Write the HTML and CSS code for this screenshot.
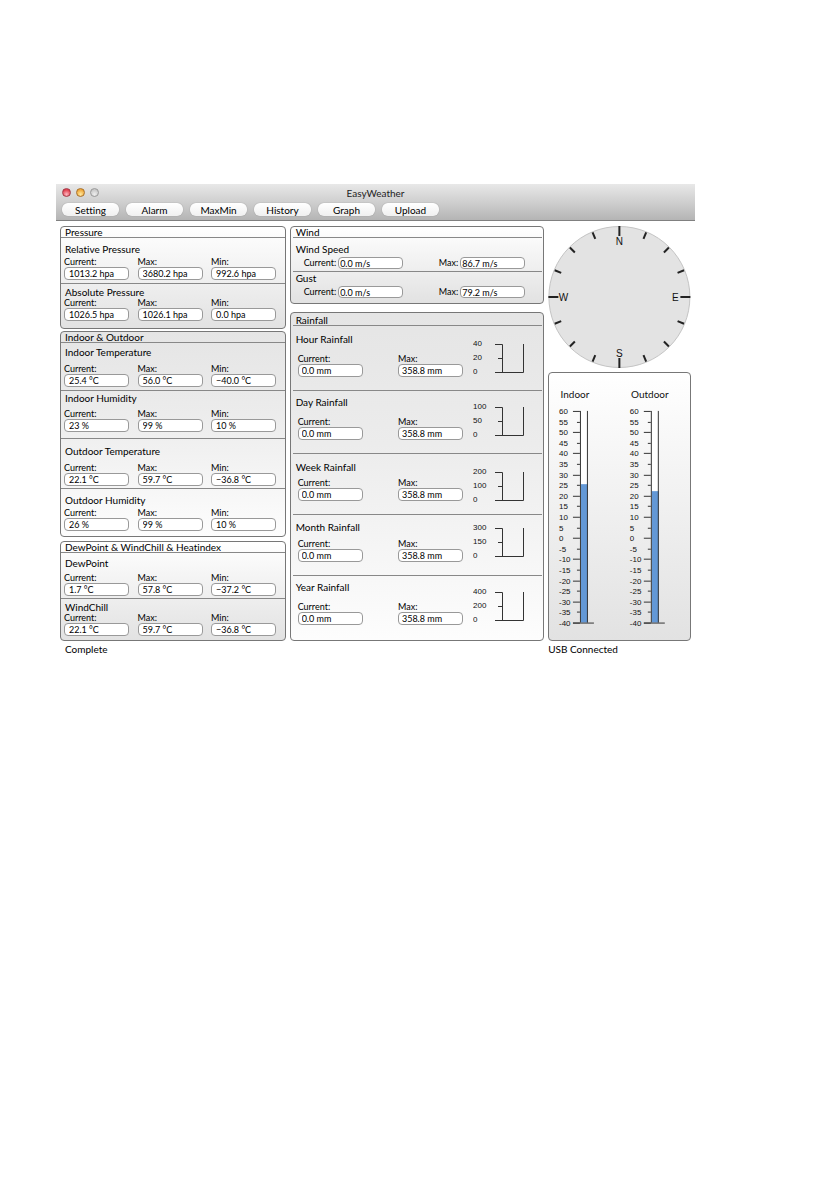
FILE: index.html
```html
<!DOCTYPE html>
<html lang="en">
<head>
<meta charset="utf-8">
<title>EasyWeather</title>
<link rel="stylesheet" href="styles.css">
</head>
<body>
<div class="window">
  <header class="toolbar">
    <div class="titlebar">
      <div class="lights"><span class="light close"></span><span class="light minimize"></span><span class="light zoom"></span></div>
      <h1>EasyWeather</h1>
    </div>
    <nav class="actions">
      <button type="button">Setting</button>
      <button type="button">Alarm</button>
      <button type="button">MaxMin</button>
      <button type="button">History</button>
      <button type="button">Graph</button>
      <button type="button">Upload</button>
    </nav>
  </header>

  <main class="columns">
    <div class="column readings">
      <section class="panel fade-down pressure">
        <h2>Pressure</h2>
        <div class="reading relative-pressure">
          <h3>Relative Pressure</h3>
          <div class="fields">
            <label>Current:<input value="1013.2 hpa"></label>
            <label>Max:<input value="3680.2 hpa"></label>
            <label>Min:<input value="992.6 hpa"></label>
          </div>
        </div>
        <div class="reading absolute-pressure">
          <h3>Absolute Pressure</h3>
          <div class="fields">
            <label>Current:<input value="1026.5 hpa"></label>
            <label>Max:<input value="1026.1 hpa"></label>
            <label>Min:<input value="0.0 hpa"></label>
          </div>
        </div>
      </section>

      <section class="panel fade-up climate">
        <h2>Indoor &amp; Outdoor</h2>
        <div class="reading indoor-temperature">
          <h3>Indoor Temperature</h3>
          <div class="fields">
            <label>Current:<input value="25.4 °C"></label>
            <label>Max:<input value="56.0 °C"></label>
            <label>Min:<input value="−40.0 °C"></label>
          </div>
        </div>
        <div class="reading indoor-humidity">
          <h3>Indoor Humidity</h3>
          <div class="fields">
            <label>Current:<input value="23 %"></label>
            <label>Max:<input value="99 %"></label>
            <label>Min:<input value="10 %"></label>
          </div>
        </div>
        <div class="reading outdoor-temperature">
          <h3>Outdoor Temperature</h3>
          <div class="fields">
            <label>Current:<input value="22.1 °C"></label>
            <label>Max:<input value="59.7 °C"></label>
            <label>Min:<input value="−36.8 °C"></label>
          </div>
        </div>
        <div class="reading outdoor-humidity">
          <h3>Outdoor Humidity</h3>
          <div class="fields">
            <label>Current:<input value="26 %"></label>
            <label>Max:<input value="99 %"></label>
            <label>Min:<input value="10 %"></label>
          </div>
        </div>
      </section>

      <section class="panel fade-down dew">
        <h2>DewPoint &amp; WindChill &amp; Heatindex</h2>
        <div class="reading dewpoint">
          <h3>DewPoint</h3>
          <div class="fields">
            <label>Current:<input value="1.7 °C"></label>
            <label>Max:<input value="57.8 °C"></label>
            <label>Min:<input value="−37.2 °C"></label>
          </div>
        </div>
        <div class="reading windchill">
          <h3>WindChill</h3>
          <div class="fields">
            <label>Current:<input value="22.1 °C"></label>
            <label>Max:<input value="59.7 °C"></label>
            <label>Min:<input value="−36.8 °C"></label>
          </div>
        </div>
      </section>
    </div>

    <div class="column middle">
      <section class="panel fade-down wind">
        <h2>Wind</h2>
        <div class="reading wind-speed">
          <h3>Wind Speed</h3>
          <div class="inline-fields">
            <label>Current:<input value="0.0 m/s"></label>
            <label>Max:<input value="86.7 m/s"></label>
          </div>
        </div>
        <div class="reading gust">
          <h3>Gust</h3>
          <div class="inline-fields">
            <label>Current:<input value="0.0 m/s"></label>
            <label>Max:<input value="79.2 m/s"></label>
          </div>
        </div>
      </section>

      <section class="panel fade-up rainfall">
        <h2>Rainfall</h2>
        <div class="reading hour">
          <h3>Hour Rainfall</h3>
          <div class="rain-fields">
            <label>Current:<input value="0.0 mm"></label>
            <label>Max:<input value="358.8 mm"></label>
          </div>
          <svg class="gauge" viewBox="0 0 54 40"><text x="0" y="9">40</text><text x="0" y="23">20</text><text x="0" y="37">0</text><path d="M22 7.500h7.500v28M25 21.500h4M50.500 7v28.500H22"/></svg>
        </div>
        <div class="reading day">
          <h3>Day Rainfall</h3>
          <div class="rain-fields">
            <label>Current:<input value="0.0 mm"></label>
            <label>Max:<input value="358.8 mm"></label>
          </div>
          <svg class="gauge" viewBox="0 0 54 40"><text x="0" y="9">100</text><text x="0" y="23">50</text><text x="0" y="37">0</text><path d="M22 7.500h7.500v28M25 21.500h4M50.500 7v28.500H22"/></svg>
        </div>
        <div class="reading week">
          <h3>Week Rainfall</h3>
          <div class="rain-fields">
            <label>Current:<input value="0.0 mm"></label>
            <label>Max:<input value="358.8 mm"></label>
          </div>
          <svg class="gauge" viewBox="0 0 54 40"><text x="0" y="9">200</text><text x="0" y="23">100</text><text x="0" y="37">0</text><path d="M22 7.500h7.500v28M25 21.500h4M50.500 7v28.500H22"/></svg>
        </div>
        <div class="reading month">
          <h3>Month Rainfall</h3>
          <div class="rain-fields">
            <label>Current:<input value="0.0 mm"></label>
            <label>Max:<input value="358.8 mm"></label>
          </div>
          <svg class="gauge" viewBox="0 0 54 40"><text x="0" y="9">300</text><text x="0" y="23">150</text><text x="0" y="37">0</text><path d="M22 7.500h7.500v28M25 21.500h4M50.500 7v28.500H22"/></svg>
        </div>
        <div class="reading year">
          <h3>Year Rainfall</h3>
          <div class="rain-fields">
            <label>Current:<input value="0.0 mm"></label>
            <label>Max:<input value="358.8 mm"></label>
          </div>
          <svg class="gauge" viewBox="0 0 54 40"><text x="0" y="9">400</text><text x="0" y="23">200</text><text x="0" y="37">0</text><path d="M22 7.500h7.500v28M25 21.500h4M50.500 7v28.500H22"/></svg>
        </div>
      </section>
    </div>

    <aside class="column dials">
      <svg class="compass" viewBox="0 0 142 142">
        <circle cx="71" cy="71" r="70.500"/>
        <g id="compass-ticks"></g>
        <text x="71" y="19">N</text>
        <text x="71" y="131">S</text>
        <text x="15" y="75">W</text>
        <text x="127" y="75">E</text>
      </svg>
      <section class="panel fade-down thermometers">
        <svg class="scales" viewBox="0 0 141 267">
          <text class="scale-title" x="26" y="25">Indoor</text>
          <text class="scale-title" x="101" y="25">Outdoor</text>
          <g id="indoor" data-value="25.4" transform="translate(10 0)"></g>
          <g id="outdoor" data-value="22.1" transform="translate(81 0)"></g>
        </svg>
      </section>
    </aside>
  </main>

  <footer class="status">
    <span class="progress">Complete</span>
    <span class="connection">USB Connected</span>
  </footer>
</div>
<script src="script.js"></script>
</body>
</html>
```

FILE: styles.css
```css
* {
  box-sizing: border-box;
}

body {
  margin: 0;
  padding: 184px 127px 40px 56px;
  background: #fff;
  color: #000;
  font-family: Lato, "Open Sans", sans-serif;
  font-size: 10px;
  font-weight: 400;
  font-variant-ligatures: none;
  line-height: 12px;
}

h1, h2, h3 {
  margin: 0;
  font-size: 10px;
  font-weight: 400;
}

.toolbar {
  height: 37px;
  border-bottom: 1px solid #808080;
  background: linear-gradient(#e8e8e8, #cfcfcf 50%, #b4b4b4);
}

.titlebar {
  display: grid;
  grid-template-columns: 1fr auto 1fr;
  align-items: center;
  height: 17px;
  padding: 0 6px;
}

.titlebar h1 {
  color: #222;
}

.lights {
  display: flex;
  gap: 5px;
}

.light {
  width: 9px;
  height: 9px;
  border: 1px solid #888;
  border-radius: 50%;
}

.close {
  border-color: #a33a48;
  background: radial-gradient(circle at 50% 75%, #ffb8c0, #e0404f 70%);
}

.minimize {
  border-color: #a8702a;
  background: radial-gradient(circle at 50% 75%, #ffe9a0, #efa83a 70%);
}

.zoom {
  border-color: #999;
  background: radial-gradient(circle at 50% 75%, #eee, #c4c4c4 80%);
}

.actions {
  display: flex;
  gap: 7px;
  padding: 2px 6px 0;
}

.actions button {
  width: 57px;
  height: 13px;
  padding: 0;
  border: 0;
  border-radius: 6px;
  background: linear-gradient(#fff, #f0f0f0);
  box-shadow: 0 0 1px #777;
  color: #000;
  font: inherit;
}

.columns {
  display: grid;
  grid-template-columns: 226fr 255fr 143fr;
  column-gap: 4px;
  padding: 5px 4px 0;
}

.column {
  display: flex;
  flex-direction: column;
  min-width: 0;
}

.readings {
  gap: 2px;
}

.middle {
  gap: 8px;
}

.dials {
  gap: 4px;
}

.panel {
  border: 1px solid #777;
  border-radius: 4px;
}

.fade-down {
  background: linear-gradient(#fff, #f6f6f6 30%, #e2e2e2);
}

.fade-up {
  background: linear-gradient(#e5e5e5, #ececec 40%, #fdfdfd);
}

.panel h2 {
  height: 10px;
  padding-left: 4px;
  line-height: 10px;
}

.dew {
  margin-top: 2px;
}

.reading {
  display: grid;
  border-top: 1px solid #888;
}

.readings h3 {
  padding-left: 4px;
}

.fields {
  display: grid;
  grid-template-columns: repeat(3, 1fr);
  padding-left: 3px;
}

label {
  display: block;
  font-size: 9px;
  line-height: 10px;
}

input {
  display: block;
  width: 65px;
  height: 13px;
  padding: 0 4px;
  border: 1px solid #999;
  border-radius: 4px;
  background: #fff;
  color: #000;
  font: 9px/11px Lato, "Open Sans", sans-serif;
}

.relative-pressure { padding: 5px 0 3px; row-gap: 2px; }
.absolute-pressure { padding: 2px 0 7px; }
.indoor-temperature { padding: 3px 0; row-gap: 6px; }
.indoor-humidity { padding: 1px 0 6px; row-gap: 5px; }
.outdoor-temperature { padding: 6px 0 2px; row-gap: 6px; }
.outdoor-humidity { padding: 5px 0; row-gap: 2px; }
.dewpoint { padding: 4px 0 2px; row-gap: 4px; }
.windchill { padding: 2px 0 4px; }

.middle .panel {
  padding: 0 1px 0 2px;
}

.middle .panel h2,
.middle h3 {
  padding-left: 3px;
}

.inline-fields {
  display: flex;
  justify-content: space-between;
  padding: 0 17px 0 11px;
}

.inline-fields label {
  display: flex;
  align-items: center;
  gap: 2px;
}

.inline-fields input {
  height: 12px;
  padding: 0 1px;
}

.wind-speed { padding: 5px 0 2px; row-gap: 2px; }
.gust { padding: 0 0 5px; row-gap: 2px; }

.middle .rainfall h2 {
  height: 12px;
  line-height: 14px;
}

.rainfall .reading {
  grid-template-columns: 1fr 54px;
  padding-right: 15px;
}

.rainfall h3 {
  grid-column: 1;
}

.rain-fields {
  display: grid;
  grid-template-columns: 4fr 3fr;
  grid-column: 1;
  padding: 0 0 13px 5px;
}

.rain-fields label {
  width: 65px;
}

.rain-fields input {
  padding: 0 3px;
}

.gauge {
  grid-row: 1 / 3;
  grid-column: 2;
  width: 54px;
  height: 40px;
}

.hour h3 { padding-top: 7px; padding-bottom: 9px; }
.day h3 { padding-top: 5px; padding-bottom: 9px; }
.week h3 { padding-top: 7px; padding-bottom: 5px; }
.month h3 { padding-top: 6px; padding-bottom: 6px; }
.year h3 { padding-top: 5px; padding-bottom: 9px; }
.hour .gauge, .week .gauge { margin-top: 11px; }
.day .gauge, .year .gauge { margin-top: 9px; }
.month .gauge { margin-top: 6px; }
.year .rain-fields { padding-bottom: 15px; }

svg {
  display: block;
}

svg text {
  fill: #111;
  font: 8px "Liberation Sans", sans-serif;
}

svg path,
svg line {
  fill: none;
  stroke: #333;
}

.compass {
  width: 100%;
  height: 142px;
}

.compass circle {
  fill: #e3e3e3;
  stroke: #c4c4c4;
}

.compass text {
  font-size: 10px;
  text-anchor: middle;
}

.compass line {
  stroke: #222;
  stroke-width: 2;
}

.thermometers {
  flex: 1;
}

.scales {
  width: 100%;
}

.scales .scale-title {
  font: 10px Lato, "Open Sans", sans-serif;
  text-anchor: middle;
}

.scales .mercury {
  fill: #6398d6;
}

.status {
  display: grid;
  grid-template-columns: 485fr 143fr;
  column-gap: 4px;
  padding: 2px 4px 1px;
}

.progress {
  padding-left: 5px;
}
```

FILE: script.js
```js
const SVG = "http://www.w3.org/2000/svg";

function add(parent, name, attributes, content) {
  const node = document.createElementNS(SVG, name);
  for (const key in attributes) node.setAttribute(key, attributes[key]);
  if (content !== undefined) node.textContent = content;
  parent.appendChild(node);
}

const ticks = document.getElementById("compass-ticks");
for (let i = 0; i < 16; i++) {
  const main = i % 4 === 0;
  add(ticks, "line", {
    x1: 71, x2: 71, y1: main ? 0 : 1, y2: main ? 10 : 8,
    transform: `rotate(${i * 22.5} 71 71)`
  });
}

const TOP = 38;
const BOTTOM = 250;
const yFor = degrees => BOTTOM - (degrees + 40) * (BOTTOM - TOP) / 100;

for (const id of ["indoor", "outdoor"]) {
  const group = document.getElementById(id);
  const level = yFor(Number(group.dataset.value));
  add(group, "rect", { x: 22, y: TOP, width: 7, height: BOTTOM - TOP, fill: "#fff" });
  add(group, "rect", { class: "mercury", x: 22, y: level, width: 7, height: BOTTOM - level });
  add(group, "path", { d: `M21.5 ${TOP}V${BOTTOM}M28.5 ${TOP}V${BOTTOM}` });
  for (let degrees = 60; degrees >= -40; degrees -= 5) {
    const y = Math.round(yFor(degrees));
    add(group, "text", { x: 0, y: y + 3 }, degrees);
    add(group, "line", { x1: degrees % 10 ? 18 : 14, x2: 21, y1: y + 0.5, y2: y + 0.5 });
  }
  add(group, "line", { x1: 14, x2: 35, y1: BOTTOM + 0.5, y2: BOTTOM + 0.5 });
}
```
